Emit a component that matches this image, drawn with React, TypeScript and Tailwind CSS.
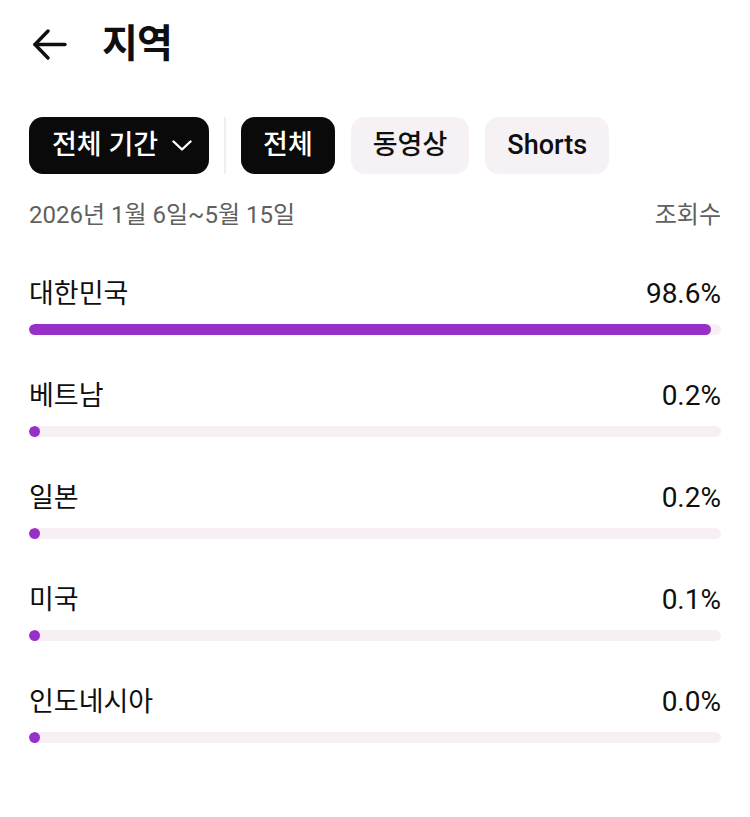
const regions = [
  { name: "대한민국", pct: 98.6 },
  { name: "베트남", pct: 0.2 },
  { name: "일본", pct: 0.2 },
  { name: "미국", pct: 0.1 },
  { name: "인도네시아", pct: 0.0 },
];

export default function App() {
  return (
    <div
      className="w-[750px] min-h-[817px] bg-white text-[#0f0f0f] px-[29px]"
      style={{ fontFamily: "Roboto, 'Noto Sans CJK KR', sans-serif" }}
    >
      {/* Header */}
      <div className="h-[88px] flex items-center">
        <svg width="36" height="31" viewBox="0 0 36 31" className="ml-[3px]" fill="none" stroke="currentColor" strokeWidth="3.4" strokeLinecap="round" strokeLinejoin="round">
          <path d="M3 15.5H33" />
          <path d="M16 2L3 15.5L16 29" />
        </svg>
        <h1 className="ml-[34px] text-[39px] font-bold leading-none tracking-tight">지역</h1>
      </div>

      {/* Filter chips */}
      <div className="mt-[29px] flex items-center h-[57px]">
        <button className="h-full rounded-[14px] bg-[#0a0a0a] text-white pl-[23px] pr-[17px] flex items-center gap-[14px] text-[27px] font-medium">
          전체 기간
          <svg width="20" height="11" viewBox="0 0 20 11" fill="none" stroke="currentColor" strokeWidth="2.4" strokeLinecap="round" strokeLinejoin="round">
            <path d="M1.5 1.5L10 9.5L18.5 1.5" />
          </svg>
        </button>
        <div className="w-[2px] h-full bg-[#f1eef0] mx-[15px]" />
        <button className="h-full rounded-[14px] bg-[#0a0a0a] text-white px-[22px] text-[27px] font-medium">
          전체
        </button>
        <button className="h-full rounded-[14px] bg-[#f6f1f5] px-[22px] ml-[16px] text-[27px] font-medium">
          동영상
        </button>
        <button className="h-full rounded-[14px] bg-[#f6f1f5] px-[22px] ml-[16px] text-[27px] font-medium">
          Shorts
        </button>
      </div>

      {/* Date range */}
      <div className="mt-[27px] flex justify-between items-center text-[24px] leading-[28px] text-[#606060]">
        <span>2026년 1월 6일~5월 15일</span>
        <span>조회수</span>
      </div>

      {/* Region list */}
      <div className="mt-[49px] flex flex-col gap-[45px]">
        {regions.map((r) => (
          <div key={r.name}>
            <div className="flex justify-between items-center leading-[32px]">
              <span className="text-[27px]">{r.name}</span>
              <span className="text-[28px]">{r.pct.toFixed(1)}%</span>
            </div>
            <div className="mt-[14px] h-[11px] rounded-full bg-[#f6f0f5] overflow-hidden">
              <div
                className="h-full rounded-full bg-[#9630c7]"
                style={{ width: `max(11px, ${r.pct}%)` }}
              />
            </div>
          </div>
        ))}
      </div>
    </div>
  );
}
